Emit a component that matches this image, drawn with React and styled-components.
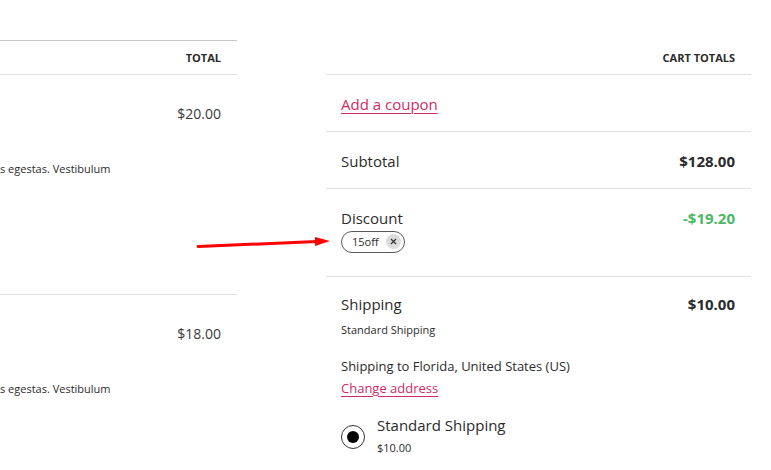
import React from "react";
import styled, { createGlobalStyle } from "styled-components";

const Global = createGlobalStyle`
  html, body { margin: 0; padding: 0; background: #fff; }
  body { font-family: "Open Sans", "Noto Sans", sans-serif; color: #2b2b2b; overflow: hidden; }
  * { box-sizing: border-box; }
`;

const Page = styled.div`
  position: relative;
  display: flex;
  align-items: flex-start;
  gap: 89px;
  padding-top: 40px;
  width: 771px;
  height: 470px;
  overflow: hidden;
`;

const LeftTable = styled.div`
  width: 237px;
  flex: none;
  border-top: 1px solid #c8c8c8;
`;

const HeadCell = styled.div`
  height: 34px;
  display: flex;
  align-items: center;
  justify-content: flex-end;
  padding-right: 16px;
  border-bottom: 1px solid #e0e0e0;
  font-size: 11px;
  font-weight: 700;
  text-transform: uppercase;
  color: #2b2b2b;
`;

const ItemRow = styled.div`
  height: 220px;
  padding: 29px 16px 0 0;
  border-bottom: 1px solid ${(p) => (p.$last ? "transparent" : "#e0e0e0")};
  display: flex;
  flex-direction: column;
`;

const ItemPrice = styled.div`
  text-align: right;
  font-size: 14px;
  line-height: 20px;
  color: #3a3a3a;
`;

const ItemDesc = styled.div`
  margin-top: 37px;
  font-size: 11px;
  line-height: 16px;
  color: #2b2b2b;
  white-space: nowrap;
`;

const Totals = styled.div`
  width: 425px;
  flex: none;
`;

const TotalsHead = styled(HeadCell)`
  margin-top: 1px;
`;

const Block = styled.div`
  padding: ${(p) => p.$pad || "0 16px 0 15px"};
  border-bottom: ${(p) => (p.$noBorder ? "none" : "1px solid #e0e0e0")};
`;

const Row = styled.div`
  display: flex;
  justify-content: space-between;
  align-items: flex-start;
`;

const Label = styled.div`
  font-size: 15px;
  line-height: 22px;
  color: #2b2b2b;
`;

const Value = styled.div`
  font-size: 15px;
  line-height: 22px;
  font-weight: 700;
  color: ${(p) => p.$color || "#2b2b2b"};
`;

const Link = styled.a`
  display: inline-block;
  font-size: ${(p) => (p.$small ? 13 : 15)}px;
  line-height: ${(p) => (p.$small ? 21 : 22)}px;
  color: #cd2d64;
  text-decoration: underline;
  text-underline-offset: 3px;
  text-decoration-thickness: 1px;
  cursor: pointer;
`;

const Chip = styled.span`
  display: inline-flex;
  align-items: center;
  gap: 7px;
  height: 22px;
  padding: 0 3px 0 10px;
  border: 1px solid #5a5a5a;
  border-radius: 11px;
  font-size: 11px;
  color: #2b2b2b;
  margin-top: 1px;
`;

const ChipX = styled.span`
  width: 15px;
  height: 15px;
  border-radius: 50%;
  background: #dcdcdc;
  display: flex;
  align-items: center;
  justify-content: center;
`;

const Small = styled.div`
  margin-top: 7px;
  font-size: 11px;
  line-height: 16px;
  color: #2b2b2b;
`;

const Dest = styled.div`
  margin-top: 18px;
  font-size: 13px;
  line-height: 20px;
  color: #2b2b2b;
`;

const RadioRow = styled.div`
  display: flex;
  align-items: flex-start;
  gap: 12px;
  margin-top: 14px;
`;

const Radio = styled.span`
  width: 24px;
  height: 24px;
  margin-top: 12px;
  border-radius: 50%;
  border: 1px solid #333;
  display: flex;
  align-items: center;
  justify-content: center;
  flex: none;
  &::after {
    content: "";
    width: 12px;
    height: 12px;
    border-radius: 50%;
    background: #000;
  }
`;

const RadioText = styled.div`
  display: flex;
  flex-direction: column;
`;

const RadioLabel = styled.div`
  font-size: 15px;
  line-height: 24px;
  color: #2b2b2b;
`;

const RadioPrice = styled.div`
  margin-top: 2px;
  font-size: 11px;
  line-height: 18px;
  color: #2b2b2b;
`;

const Arrow = styled.svg`
  position: absolute;
  left: 196px;
  top: 234px;
  overflow: visible;
`;

export default function App() {
  return (
    <>
      <Global />
      <Page>
        <LeftTable>
          <HeadCell>Total</HeadCell>
          <ItemRow>
            <ItemPrice>$20.00</ItemPrice>
            <ItemDesc>s egestas. Vestibulum</ItemDesc>
          </ItemRow>
          <ItemRow $last>
            <ItemPrice>$18.00</ItemPrice>
            <ItemDesc>s egestas. Vestibulum</ItemDesc>
          </ItemRow>
        </LeftTable>

        <Totals>
          <TotalsHead>Cart totals</TotalsHead>
          <Block $pad="18px 16px 16px 15px">
            <Link>Add a coupon</Link>
          </Block>
          <Block $pad="18px 16px 16px 15px">
            <Row>
              <Label>Subtotal</Label>
              <Value>$128.00</Value>
            </Row>
          </Block>
          <Block $pad="18px 16px 23px 15px">
            <Row>
              <div>
                <Label>Discount</Label>
                <Chip>
                  15off
                  <ChipX>
                    <svg width="7" height="7" viewBox="0 0 7 7">
                      <path d="M1 1L6 6M6 1L1 6" stroke="#333" strokeWidth="1.2" />
                    </svg>
                  </ChipX>
                </Chip>
              </div>
              <Value $color="#4ab866">-$19.20</Value>
            </Row>
          </Block>
          <Block $pad="16px 16px 0 15px" $noBorder>
            <Row>
              <Label>Shipping</Label>
              <Value>$10.00</Value>
            </Row>
            <Small>Standard Shipping</Small>
            <Dest>Shipping to Florida, United States (US)</Dest>
            <Link $small>Change address</Link>
            <RadioRow>
              <Radio />
              <RadioText>
                <RadioLabel>Standard Shipping</RadioLabel>
                <RadioPrice>$10.00</RadioPrice>
              </RadioText>
            </RadioRow>
          </Block>
        </Totals>

        <Arrow width="136" height="16" viewBox="0 0 136 16">
          <path d="M2 12.5L121 7.5" stroke="#f00" strokeWidth="3" strokeLinecap="round" />
          <path d="M119 3L134 7L119 12Z" fill="#f00" />
        </Arrow>
      </Page>
    </>
  );
}
